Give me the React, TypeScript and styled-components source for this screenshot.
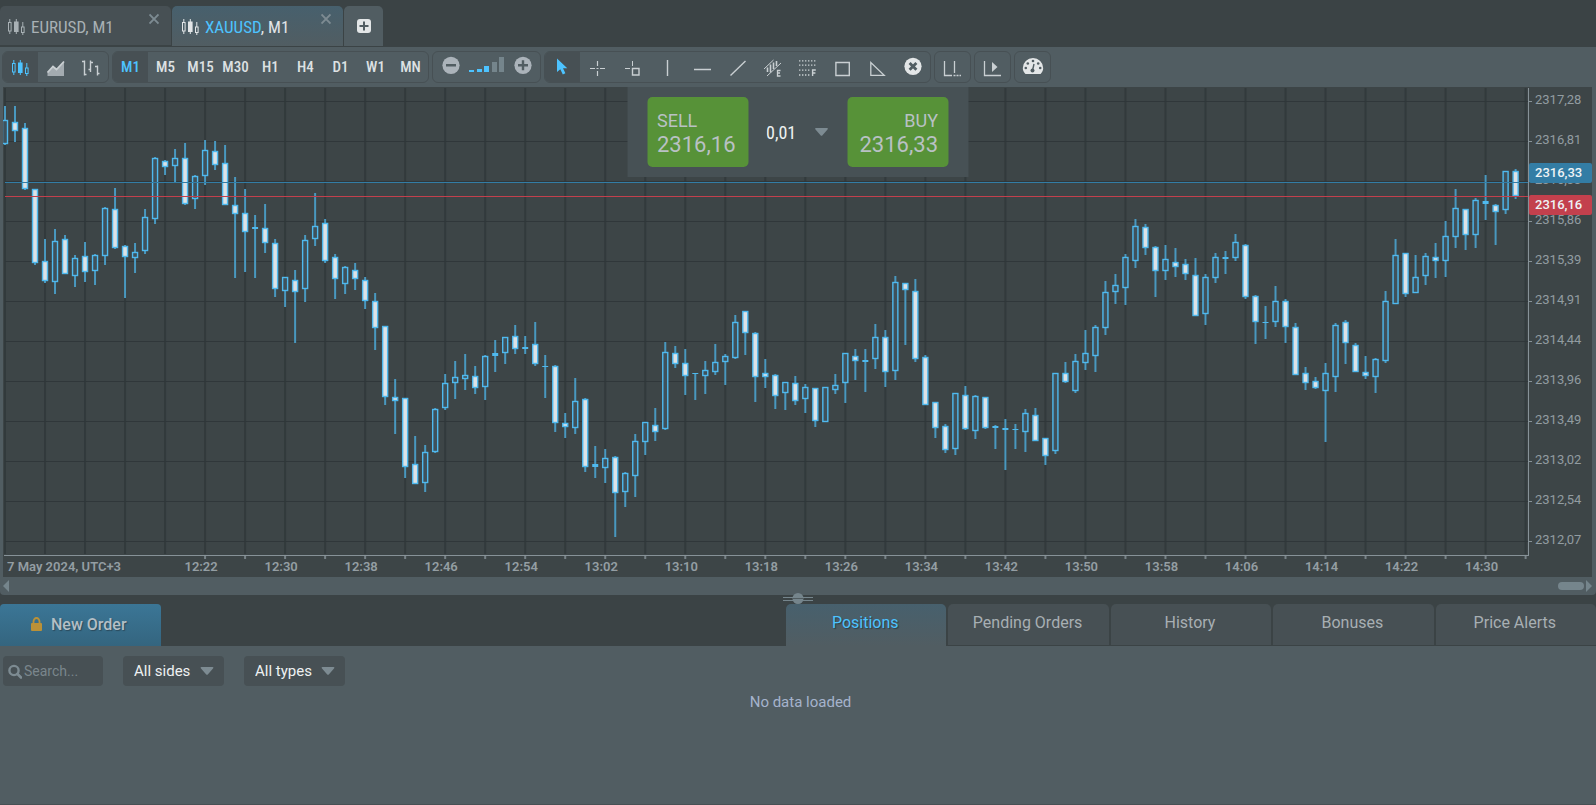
import React from "react";
import styled, { createGlobalStyle, css } from "styled-components";

const color = {
  page: "#3b4345",
  panel: "#515d62",
  inset: "#475054",
  plot: "#3d4547",
  grid: "#30373a",
  axis: "#879298",
  accent: "#4dc3ff",
  icon: "#c9cfd2",
};

const condensed = `"Roboto Condensed", Roboto, "Liberation Sans", sans-serif`;

const GlobalStyle = createGlobalStyle`
  *, *::before, *::after { box-sizing: border-box; }
  body { margin: 0; background: ${color.page}; font-family: Roboto, "Liberation Sans", sans-serif; }
  button, input, select { font: inherit; color: inherit; }
  button { cursor: pointer; }
`;

const resetButton = css`
  border: 0;
  padding: 0;
  background: none;
`;

const Page = styled.div`
  display: flex;
  flex-direction: column;
  min-height: 100vh;
`;

/* ---------- workspace tabs ---------- */

const ChartTabs = styled.header`
  display: flex;
  align-items: flex-end;
  gap: 1px;
  height: 46px;
`;

const ChartTab = styled.div<{ $active?: boolean }>`
  display: flex;
  justify-content: space-between;
  width: 171px;
  height: ${(p) => (p.$active ? 40 : 39)}px;
  margin-bottom: ${(p) => (p.$active ? 0 : 1)}px;
  padding: 0 12px 0 ${(p) => (p.$active ? 10 : 8)}px;
  border-radius: 5px 5px 0 0;
  background: ${(p) =>
    p.$active ? `linear-gradient(#47606d, ${color.panel})` : color.inset};
  color: ${(p) => (p.$active ? "#e2e5e7" : "#a9b1b5")};
`;

const ChartTabLabel = styled.button`
  ${resetButton}
  display: flex;
  align-items: center;
  gap: 5px;
  height: 41px;
  font-family: ${condensed};
  font-size: 17px;
  white-space: pre;
`;

const Symbol = styled.span<{ $active?: boolean }>`
  color: ${(p) => (p.$active ? color.accent : "inherit")};
`;

const CloseButton = styled.button`
  ${resetButton}
  display: flex;
  height: 12px;
  margin-top: 7px;
  color: #7d8b92;
`;

const AddTab = styled.button`
  ${resetButton}
  display: flex;
  align-items: center;
  justify-content: center;
  width: 39px;
  height: 40px;
  border-radius: 5px 5px 0 0;
  background: ${color.panel};
`;

/* ---------- toolbar ---------- */

const Toolbar = styled.div`
  display: flex;
  gap: 3px;
  height: 41px;
  padding: 4px 2px;
  border-top: 1px solid ${color.page};
  background: ${color.panel};
`;

const Group = styled.div`
  display: flex;
  height: 32px;
  border: 1px solid ${color.inset};
  border-radius: 6px;
  overflow: hidden;
`;

const Tool = styled.button<{ $active?: boolean }>`
  ${resetButton}
  display: flex;
  align-items: center;
  justify-content: center;
  width: 35px;
  height: 30px;
  background: ${(p) => (p.$active ? color.inset : "transparent")};
  color: ${(p) => (p.$active ? color.accent : color.icon)};
`;

const Period = styled(Tool)`
  font-family: ${condensed};
  font-size: 15px;
  font-weight: 500;
  color: ${(p) => (p.$active ? color.accent : "#dde1e3")};
`;

const ZoomLevel = styled.svg`
  width: 37px;
  height: 30px;
`;

/* ---------- chart ---------- */

const ChartFrame = styled.section`
  padding: 0 4px 0 3px;
  background: ${color.panel};
`;

const ChartArea = styled.div`
  position: relative;
  background: ${color.plot};
`;

const ChartSvg = styled.svg`
  display: block;
  width: 100%;
  height: auto;
  font-family: Roboto, sans-serif;
  font-size: 13px;
`;

const OrderBox = styled.div`
  position: absolute;
  top: 0;
  left: 50%;
  transform: translateX(-50%);
  display: flex;
  align-items: flex-start;
  width: 341px;
  height: 90px;
  padding: 10px 20px;
  background: #475155;
`;

const PriceButton = styled.button<{ $side: "left" | "right" }>`
  ${resetButton}
  display: flex;
  flex: 0 0 101px;
  flex-direction: column;
  justify-content: center;
  height: 70px;
  padding: 1px 10px 0;
  border-radius: 5px;
  background: #579238;
  color: #b9c1c4;
  font-size: 18px;
  line-height: 24px;
  text-align: ${(p) => p.$side};
`;

const Quote = styled.span`
  font-size: 22px;
`;

const Volume = styled.label`
  display: flex;
  align-items: center;
  flex: 1;
  height: 70px;
  padding-left: 18px;
  color: #eef1f2;
`;

const VolumeInput = styled.input`
  width: 48px;
  border: 0;
  padding: 0;
  outline: 0;
  background: none;
  font-family: ${condensed};
  font-size: 18px;
`;

const ScrollRow = styled.div`
  display: flex;
  align-items: center;
  gap: 2px;
  height: 18px;
  padding: 0 4px 0 3px;
  border-radius: 0 0 4px 4px;
  background: ${color.panel};
`;

const ScrollTrack = styled.div`
  display: flex;
  justify-content: flex-end;
  flex: 1;
`;

const ScrollThumb = styled.div`
  width: 26px;
  height: 8px;
  border-radius: 4px;
  background: #75858c;
`;

const ScrollArrow = styled.button`
  ${resetButton}
  display: flex;
`;

const Splitter = styled.div`
  display: flex;
  align-items: center;
  justify-content: center;
  height: 9px;
  padding-bottom: 1px;
`;

/* ---------- orders panel ---------- */

const OrdersHeader = styled.div`
  display: flex;
  justify-content: space-between;
  height: 42px;
`;

const NewOrder = styled.button`
  ${resetButton}
  display: flex;
  align-items: center;
  gap: 9px;
  width: 161px;
  padding: 0 0 2px 31px;
  border-radius: 4px 4px 0 0;
  background: linear-gradient(#3b7696, #34657f);
  color: #b3bfc6;
  font-size: 16px;
  font-weight: 500;
  text-shadow: 1px 1px 1px #2b4a5c;
`;

const OrderTabs = styled.div`
  display: grid;
  grid-template-columns: repeat(5, 1fr);
  gap: 2px;
  width: 810px;
`;

const OrderTab = styled.button<{ $active?: boolean }>`
  ${resetButton}
  height: ${(p) => (p.$active ? 42 : 41)}px;
  padding: 0 2px 5px 0;
  border-radius: 5px 5px 0 0;
  background: ${(p) =>
    p.$active ? `linear-gradient(#47606d, ${color.panel})` : color.inset};
  color: ${(p) => (p.$active ? color.accent : "#a7afb3")};
  font-size: 16px;
  text-shadow: ${(p) => (p.$active ? "1px 1px 1px #2f3e46" : "none")};
`;

const OrdersPanel = styled.main`
  flex: 1;
  border-bottom: 1px solid ${color.inset};
  background: ${color.panel};
`;

const Filters = styled.div`
  display: flex;
  gap: 20px;
  padding: 10px 3px 0;
`;

const SearchField = styled.label`
  display: flex;
  align-items: center;
  gap: 2px;
  width: 100px;
  height: 30px;
  padding: 0 5px;
  border-radius: 4px;
  background: ${color.inset};
`;

const SearchInput = styled.input`
  flex: 1;
  min-width: 0;
  border: 0;
  padding: 0;
  outline: 0;
  background: none;
  font-size: 14px;
  &::placeholder { color: #7a868c; opacity: 1; }
`;

const SelectField = styled.label`
  display: grid;
  align-items: center;
  width: 101px;
  height: 30px;
  border-radius: 4px;
  background: ${color.inset};
  > * { grid-area: 1 / 1; }
  > svg { justify-self: end; margin-right: 10px; pointer-events: none; }
`;

const Select = styled.select`
  height: 30px;
  padding: 0 11px;
  border: 0;
  outline: 0;
  appearance: none;
  background: none;
  color: #eef1f2;
  font-size: 15px;
`;

const Empty = styled.p`
  margin: 6px 0 0;
  padding-left: 5px;
  color: #a5b3cc;
  font-size: 15px;
  line-height: 20px;
  text-align: center;
`;

/* ---------- icons ---------- */

const Icon = ({ children, w = 35, h = 30 }: { children: React.ReactNode; w?: number; h?: number }) => (
  <svg width={w} height={h} viewBox={`0 0 ${w} ${h}`} fill="none" stroke="currentColor" aria-hidden="true">
    {children}
  </svg>
);

const CandleShapes = () => (
  <>
    <path d="M1.8 0V3.5M1.8 12V15M8.3 0V15M14.8 3V8M14.8 13.5V16" />
    <rect x="0.5" y="3.5" width="2.6" height="8.5" />
    <rect x="6" y="2.5" width="4.6" height="10.5" fill="currentColor" stroke="none" />
    <rect x="13.5" y="8" width="2.6" height="5.5" />
  </>
);

const Caret = () => (
  <svg width="14" height="8" viewBox="0 0 14 8" aria-hidden="true">
    <path d="M1.5 0H12.5Q14 0 13 1.4L8 7.2Q7 8.4 6 7.2L1 1.4Q0 0 1.5 0Z" fill="#7d8b92" />
  </svg>
);

const ZoomIcon = ({ plus }: { plus?: boolean }) => (
  <Icon>
    <circle cx="18" cy="13.3" r="8.6" fill="#abb3ba" stroke="none" />
    <path d={plus ? "M13 13.3H23M18 8.3V18.3" : "M13 13.3H23"} stroke={color.panel} strokeWidth="2.4" />
  </Icon>
);

const tools: { name: string; icon: React.ReactNode }[] = [
  {
    name: "Pointer",
    icon: <path d="M12 6.5V20L15.3 17.2L17.8 22.5L20.4 21.3L18 16.2H22.3Z" fill="currentColor" stroke="none" />,
  },
  { name: "Crosshair", icon: <path d="M10 16.5H15M20 16.5H25M17.5 9V14M17.5 19V24M16.5 16.5H18.5" strokeWidth="1.2" /> },
  { name: "Crosshair with data", icon: <><path d="M10 16.5H15M17.5 9V14" /><path d="M17.5 16.5H24V23H17.5Z" strokeWidth="1.4" /></> },
  { name: "Vertical line", icon: <path d="M17.5 8V24" strokeWidth="1.4" /> },
  { name: "Horizontal line", icon: <path d="M9 17.5H26" strokeWidth="1.4" /> },
  { name: "Trend line", icon: <path d="M10.5 23.5L25.5 9" strokeWidth="1.4" /> },
  {
    name: "Equidistant channel",
    icon: (
      <>
        <path d="M9 17L18.5 8M12 24L26 11" />
        <path d="M12.5 15.5V20M15.5 12.5V20.5M18.5 10.5V17M21.5 9V14" strokeWidth="1.6" />
        <path d="M25.5 18.5H22.5V24H25.5M22.5 21H25" strokeWidth="1.3" />
      </>
    ),
  },
  {
    name: "Fibonacci",
    icon: (
      <>
        <path d="M9 8.9H26M9 13.2H26M9 18.2H20M9 23H20" strokeWidth="1.3" strokeDasharray="1.4 1.6" />
        <path d="M25.8 18H22.6V24M22.6 21H25.4" strokeWidth="1.4" />
      </>
    ),
  },
  { name: "Rectangle", icon: <path d="M10.9 10.5H24.3V23.5H10.9Z" strokeWidth="1.4" /> },
  { name: "Triangle", icon: <path d="M10.8 10.5V23.3H24.2Z" strokeWidth="1.3" /> },
  {
    name: "Remove drawings",
    icon: (
      <>
        <circle cx="18" cy="14.3" r="8.6" fill="#e3e6e7" stroke="none" />
        <path d="M14.6 10.9L21.4 17.7M21.4 10.9L14.6 17.7" stroke={color.panel} strokeWidth="2.8" />
      </>
    ),
  },
];

/* ---------- chart data ---------- */

// One entry per minute: high, body top, body bottom, low, 1 when the candle closes down.
const candles: number[][] = [
  [106,120,144,145,0],[106,122,131,142,1],[123,128,189,190,1],[189,189,263,265,1],[239,261,281,283,1],
  [229,241,282,294,0],[235,239,274,274,1],[255,258,276,287,0],[242,256,272,282,1],[254,255,271,285,0],
  [207,208,256,265,0],[188,209,248,249,1],[245,246,257,298,1],[243,252,258,273,0],[209,217,251,254,0],
  [157,158,219,224,0],[160,161,167,175,1],[149,158,166,182,0],[143,158,204,205,1],[175,176,199,209,0],
  [140,150,176,185,0],[141,151,165,170,1],[145,163,205,205,1],[177,205,214,278,1],[189,213,232,272,1],
  [215,227,229,278,1],[204,228,243,253,1],[239,243,289,297,1],[277,277,291,307,0],[270,280,292,343,1],
  [235,240,289,302,0],[193,226,239,246,0],[219,223,261,263,1],[254,257,279,299,1],[266,267,284,294,0],
  [263,270,279,290,1],[277,280,301,309,1],[293,301,328,350,1],[326,326,397,405,1],[379,397,401,434,1],
  [398,398,467,478,1],[436,464,484,484,1],[445,452,483,492,0],[408,409,452,453,0],[374,383,408,410,0],
  [361,377,383,399,0],[354,375,379,390,0],[366,376,388,394,1],[355,356,387,400,0],[340,353,356,372,1],
  [337,337,353,364,0],[325,336,349,354,1],[336,347,349,354,1],[322,344,364,366,1],[355,366,367,398,1],
  [365,366,423,432,1],[413,423,427,438,1],[378,401,428,434,0],[398,399,467,472,1],[446,464,467,478,1],
  [449,458,468,483,0],[456,457,493,537,1],[472,473,492,507,0],[434,441,476,497,0],[422,422,442,455,0],
  [408,425,432,441,1],[342,352,429,430,0],[346,353,364,368,1],[349,363,376,395,1],[373,373,374,400,1],
  [361,370,376,394,0],[344,362,372,375,0],[354,356,362,385,0],[315,322,358,359,0],[311,311,333,355,1],
  [332,333,377,402,1],[359,373,377,388,1],[374,375,396,409,1],[382,382,393,410,0],[376,383,401,405,1],
  [384,387,399,413,0],[388,388,421,427,1],[387,387,422,422,0],[374,385,390,394,0],[353,353,383,403,0],
  [349,356,361,380,1],[349,360,362,392,1],[324,337,359,369,0],[330,337,372,387,1],[276,282,371,380,0],
  [283,283,290,345,1],[279,291,359,362,1],[355,357,405,405,1],[402,402,428,438,1],[424,426,450,453,1],
  [393,393,449,455,0],[386,395,429,430,1],[395,396,431,439,0],[397,397,428,429,1],[425,426,428,449,1],
  [419,428,430,470,1],[424,429,430,449,1],[409,413,432,452,0],[408,415,441,441,1],[438,438,456,465,1],
  [373,373,451,454,0],[362,373,382,383,1],[354,361,391,393,0],[330,353,363,370,0],[325,327,356,372,0],
  [281,292,328,335,0],[274,285,292,304,0],[254,257,288,305,0],[219,226,261,268,0],[224,227,248,255,1],
  [246,247,271,297,1],[245,259,271,280,0],[248,262,267,277,1],[259,264,274,280,1],[258,275,316,316,1],
  [274,277,314,325,0],[253,257,278,283,0],[251,257,259,274,1],[234,242,258,261,0],[244,245,297,299,1],
  [295,296,322,344,1],[306,322,323,339,1],[286,301,322,327,0],[299,301,327,343,1],[323,327,375,375,1],
  [367,373,383,390,1],[377,381,388,389,1],[363,373,391,442,0],[323,325,377,392,0],[320,322,343,364,1],
  [343,345,372,372,1],[356,372,376,379,1],[358,359,377,393,0],[291,301,361,363,0],[239,255,304,304,0],
  [253,253,294,297,1],[255,277,293,293,0],[253,256,276,285,0],[243,257,261,278,1],[221,236,261,277,0],
  [189,208,237,248,0],[209,209,235,250,1],[198,200,235,248,0],[175,201,204,220,1],[204,205,212,245,1],
  [171,171,210,214,0],[169,171,196,199,1],
];

const prices = [
  "2317,28", "2316,81", "2316,33", "2315,86", "2315,39", "2314,91",
  "2314,44", "2313,96", "2313,49", "2313,02", "2312,54", "2312,07",
];

const times = [
  "12:22", "12:30", "12:38", "12:46", "12:54", "13:02", "13:10", "13:18", "13:26",
  "13:34", "13:42", "13:50", "13:58", "14:06", "14:14", "14:22", "14:30",
];

const minuteX = (i: number) => 5 + i * 10.004;
const AXIS_X = 1528;
const AXIS_Y = 554;

const Candle = ({ i, data }: { i: number; data: number[] }) => {
  const [high, top, bottom, low, down] = data;
  const x = minuteX(i);
  const body = Math.max(bottom - top, 1);
  return (
    <g>
      {high < top && <rect x={x - 1} y={high} width="2" height={top - high} fill="#4998bf" />}
      {low > bottom && <rect x={x - 1} y={bottom} width="2" height={low - bottom} fill="#4998bf" />}
      {body < 4 ? (
        <rect x={x - 3} y={top} width="6" height={body} fill="#4fb9ee" />
      ) : (
        <rect
          x={x - 2.5}
          y={top + 0.5}
          width="5"
          height={body - 1}
          fill={down ? "#dde2e6" : "#3f515b"}
          stroke="#4fb9ee"
          strokeWidth="1.4"
        />
      )}
    </g>
  );
};

const PriceBadge = ({ y, fill, children }: { y: number; fill: string; children: string }) => (
  <g>
    <rect x="1529" y={y} width="63" height="20" rx="2" fill={fill} />
    <text x="1535" y={y + 14} fill="#eef3f5" fontWeight="500">{children}</text>
  </g>
);

const PriceChart = () => (
  <ChartSvg viewBox="3 87 1589 490" role="img" aria-label="XAUUSD one minute candles">
    {prices.map((p, i) => (
      <g key={p}>
        <rect x="5" y={101 + i * 40} width={AXIS_X - 5} height="1" fill={color.grid} />
        <rect x={AXIS_X} y={101 + i * 40} width="4" height="1" fill={color.axis} />
        <text x="1535" y={104 + i * 40} fill="#929ca1">{p}</text>
      </g>
    ))}
    {Array.from({ length: 39 }, (_, i) => (
      <g key={i}>
        <rect x={minuteX(i * 4) - 1} y="88" width="2" height={AXIS_Y - 88} fill={color.grid} opacity="0.8" />
        {i >= 5 && <rect x={minuteX(i * 4) - 1} y={AXIS_Y + 1} width="2" height="4" fill={color.axis} opacity="0.8" />}
      </g>
    ))}
    {candles.map((c, i) => <Candle key={i} i={i} data={c} />)}
    <rect x="5" y="182" width={AXIS_X - 5} height="1" fill="#337da5" />
    <rect x="5" y="196" width={AXIS_X - 5} height="1" fill="#c3404d" />
    <rect x={AXIS_X} y="88" width="1" height={AXIS_Y - 86} fill={color.axis} />
    <rect x="4" y={AXIS_Y + 1} width={AXIS_X - 3} height="1" fill={color.axis} />
    <g fill="#949ea3" fontWeight="600">
      <text x="7" y="571">7 May 2024, UTC+3</text>
      {times.map((t, i) => (
        <text key={t} x={minuteX(20 + i * 8) - 4} y="571" textAnchor="middle">{t}</text>
      ))}
    </g>
    <PriceBadge y={163} fill="#337da5">2316,33</PriceBadge>
    <PriceBadge y={195} fill="#c3404d">2316,16</PriceBadge>
  </ChartSvg>
);

const TabItem = ({ symbol, active }: { symbol: string; active?: boolean }) => (
  <ChartTab $active={active}>
    <ChartTabLabel type="button">
      <Icon w={18} h={16}><CandleShapes /></Icon>
      <span><Symbol $active={active}>{symbol}</Symbol>, M1</span>
    </ChartTabLabel>
    <CloseButton type="button" aria-label={`Close ${symbol}`}>
      <Icon w={10} h={12}><path d="M0.5 1.5L9.5 10.5M9.5 1.5L0.5 10.5" strokeWidth="1.8" /></Icon>
    </CloseButton>
  </ChartTab>
);

const periods = ["M1", "M5", "M15", "M30", "H1", "H4", "D1", "W1", "MN"];
const orderTabs = ["Positions", "Pending Orders", "History", "Bonuses", "Price Alerts"];

export default function App() {
  return (
    <Page>
      <GlobalStyle />
      <ChartTabs>
        <TabItem symbol="EURUSD" />
        <TabItem symbol="XAUUSD" active />
        <AddTab type="button" aria-label="Add chart">
          <Icon w={14} h={16}>
            <rect x="0" y="1" width="14" height="14" rx="3" fill="#e3e6e7" stroke="none" />
            <path d="M2.5 8H11.5M7 3.5V12.5" stroke={color.panel} strokeWidth="2" />
          </Icon>
        </AddTab>
      </ChartTabs>

      <Toolbar>
        <Group>
          <Tool type="button" $active aria-label="Candles">
            <Icon><g transform="translate(9 8)"><CandleShapes /></g></Icon>
          </Tool>
          <Tool type="button" aria-label="Area">
            <Icon>
              <path d="M9.5 23.5V20L15 14.5L18.5 17.5L26 10V24H9.5Z" fill="#a3abb0" stroke="none" />
              <path d="M9.5 20.5L15 14.5L18.5 17.5L26 9.5" strokeWidth="1.8" />
            </Icon>
          </Tool>
          <Tool type="button" aria-label="Bars">
            <Icon>
              <path d="M9 9.5H11.5M11.5 8.5V23.5M11.5 22.5H13.5M15.5 17.5H18M17.5 8.5V20M17.5 10.5H20M22 14.5H24.5M24.5 13.5V23.5M24.5 21.5H26.5" strokeWidth="1.4" />
            </Icon>
          </Tool>
        </Group>
        <Group>
          {periods.map((p) => (
            <Period key={p} type="button" $active={p === "M1"}>{p}</Period>
          ))}
        </Group>
        <Group>
          <Tool type="button" aria-label="Zoom out"><ZoomIcon /></Tool>
          <ZoomLevel viewBox="0 0 37 30" aria-hidden="true">
            <path d="M1 18H6V20H1ZM9 17H14V20H9ZM16 14H21V20H16Z" fill={color.accent} />
            <path d="M24 10H29V20H24ZM31 5H36V20H31Z" fill="#75858c" />
          </ZoomLevel>
          <Tool type="button" aria-label="Zoom in"><ZoomIcon plus /></Tool>
        </Group>
        <Group>
          {tools.map((t, i) => (
            <Tool key={t.name} type="button" $active={i === 0} aria-label={t.name}>
              <Icon>{t.icon}</Icon>
            </Tool>
          ))}
        </Group>
        <Group>
          <Tool type="button" aria-label="Period separators">
            <Icon><path d="M9.5 9V23.5H17M19.5 9V21" strokeWidth="1.3" /><path d="M18.5 23.5H26" strokeWidth="1.4" strokeDasharray="2 1" /></Icon>
          </Tool>
        </Group>
        <Group>
          <Tool type="button" aria-label="Chart shift">
            <Icon><path d="M9.5 9V23.5H26" strokeWidth="1.3" /><path d="M17 10L22.5 15L17 20Z" fill="currentColor" stroke="none" /></Icon>
          </Tool>
        </Group>
        <Group>
          <Tool type="button" aria-label="Indicators">
            <Icon>
              <path d="M10 21.5C8.6 20 7.8 18 7.8 16A10.2 10 0 0 1 28.2 16C28.2 18 27.4 20 26 21.5Q25.5 22 25 22H11Q10.5 22 10 21.5Z" fill="#e3e6e7" stroke="none" />
              <g fill={color.panel} stroke="none">
                <circle cx="10.8" cy="16" r="1.3" /><circle cx="12.8" cy="11.5" r="1.3" />
                <circle cx="18" cy="9" r="1.3" /><circle cx="23.2" cy="11.5" r="1.3" />
                <circle cx="25.2" cy="16" r="1.3" /><circle cx="17.5" cy="18.6" r="2" />
              </g>
              <path d="M17.5 18.5L19 12" stroke={color.panel} strokeWidth="1.4" />
            </Icon>
          </Tool>
        </Group>
      </Toolbar>

      <ChartFrame>
        <ChartArea>
          <PriceChart />
          <OrderBox>
            <PriceButton type="button" $side="left">SELL<Quote>2316,16</Quote></PriceButton>
            <Volume>
              <VolumeInput aria-label="Volume" defaultValue="0,01" />
              <Caret />
            </Volume>
            <PriceButton type="button" $side="right">BUY<Quote>2316,33</Quote></PriceButton>
          </OrderBox>
        </ChartArea>
      </ChartFrame>
      <ScrollRow>
        <ScrollArrow type="button" aria-label="Scroll left">
          <svg width="6" height="12"><path d="M6 0V12L0 6Z" fill="#75858c" /></svg>
        </ScrollArrow>
        <ScrollTrack><ScrollThumb /></ScrollTrack>
        <ScrollArrow type="button" aria-label="Scroll right">
          <svg width="6" height="12"><path d="M0 0V12L6 6Z" fill="#75858c" /></svg>
        </ScrollArrow>
      </ScrollRow>
      <Splitter>
        <svg width="30" height="12" viewBox="0 0 30 12" aria-hidden="true">
          <circle cx="15" cy="5.5" r="5.5" fill="#75858c" />
          <path d="M0 4.5H30M0 7.5H30" stroke="#75858c" />
          <path d="M9 5.5H21" stroke="#505b5f" />
        </svg>
      </Splitter>

      <OrdersHeader>
        <NewOrder type="button">
          <svg width="11" height="14" viewBox="0 0 11 14" aria-hidden="true">
            <path d="M2.5 7V4.5A3 3.5 0 0 1 8.5 4.5V7" fill="none" stroke="#bb9137" strokeWidth="1.8" />
            <rect y="6" width="11" height="8" rx="1" fill="#bb9137" />
          </svg>
          New Order
        </NewOrder>
        <OrderTabs role="tablist">
          {orderTabs.map((t, i) => (
            <OrderTab key={t} type="button" role="tab" aria-selected={i === 0} $active={i === 0}>{t}</OrderTab>
          ))}
        </OrderTabs>
      </OrdersHeader>
      <OrdersPanel>
        <Filters>
          <SearchField>
            <Icon w={14} h={15}>
              <circle cx="6" cy="6.5" r="4.6" stroke="#7d8b92" strokeWidth="2.4" />
              <path d="M9.5 10L13 13.5" stroke="#7d8b92" strokeWidth="2.6" strokeLinecap="round" />
            </Icon>
            <SearchInput aria-label="Search" placeholder="Search..." />
          </SearchField>
          <SelectField>
            <Select aria-label="Side"><option>All sides</option><option>Buy</option><option>Sell</option></Select>
            <Caret />
          </SelectField>
          <SelectField>
            <Select aria-label="Type"><option>All types</option><option>Limit</option><option>Stop</option></Select>
            <Caret />
          </SelectField>
        </Filters>
        <Empty>No data loaded</Empty>
      </OrdersPanel>
    </Page>
  );
}
